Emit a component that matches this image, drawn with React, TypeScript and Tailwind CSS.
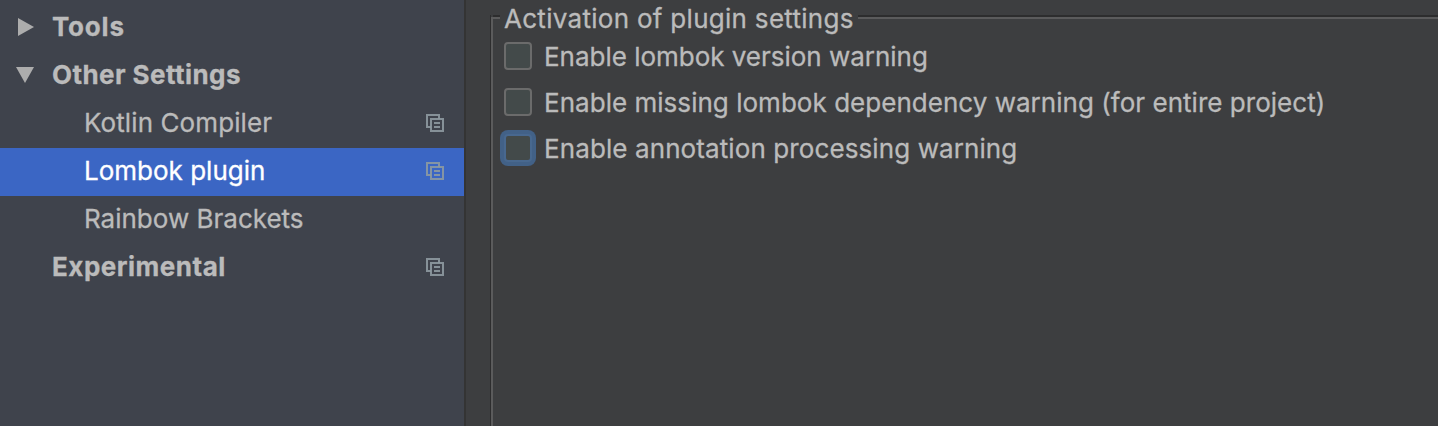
import React from 'react';

function CopyIcon() {
  return (
    <svg className="mr-[19px] shrink-0" width="20" height="20" viewBox="0 0 20 20" fill="none" stroke="#8e9aa1" strokeOpacity="0.9" strokeWidth="2">
      <path d="M6 14H2V2H14V6" />
      <path d="M6 6H18V18H6Z" />
      <path d="M9 10H15M9 14H15" />
    </svg>
  );
}

type RowProps = { label: string; bold?: boolean; arrow?: 'right' | 'down'; selected?: boolean; copy?: boolean; text: string };

function Row({ label, bold, arrow, selected, copy, text }: RowProps) {
  return (
    <div className={`flex h-12 items-center ${selected ? 'bg-[#3b66c4] text-white' : ''}`}>
      <div className={`flex shrink-0 pb-[2px] ${bold ? 'w-[52px]' : 'w-[84px]'}`}>
        {arrow === 'right' && (
          <svg className="ml-[18px]" width="16" height="18" viewBox="0 0 16 18"><path d="M0 0L16 9L0 18Z" fill="#adadad" /></svg>
        )}
        {arrow === 'down' && (
          <svg className="ml-4" width="18" height="16" viewBox="0 0 18 16"><path d="M0 0H18L9 16Z" fill="#adadad" /></svg>
        )}
      </div>
      <span className={`whitespace-nowrap pb-0.5 ${bold ? 'font-bold' : ''} ${text}`}>{label}</span>
      {copy && <div className="ml-auto pb-0.5"><CopyIcon /></div>}
    </div>
  );
}

function Check({ label, focused, text }: { label: string; focused?: boolean; text: string }) {
  return (
    <div className="flex h-[46px] items-center">
      <div className={`mb-0.5 h-7 w-7 shrink-0 rounded-[4px] border-2 bg-[#434a4a] ${focused ? 'border-[#48688f] ring-4 ring-[#426187]' : 'border-[#6b6b6b]'}`} />
      <span className={`ml-3 whitespace-nowrap ${text}`}>{label}</span>
    </div>
  );
}

export default function App() {
  return (
    <div className="flex h-[426px] w-[1438px] overflow-hidden bg-[#3d3e40] font-['Inter',sans-serif] text-[26px] leading-[30px] text-[#bbbbbb] [-webkit-text-stroke:0.3px]">
      <div className="w-[464px] shrink-0 bg-[#3f434c] pt-1">
        <Row label="Tools" bold arrow="right" text="tracking-[0.8px]" />
        <Row label="Other Settings" bold arrow="down" text="tracking-[0.43px]" />
        <Row label="Kotlin Compiler" copy text="tracking-[0.1px]" />
        <Row label="Lombok plugin" copy selected text="" />
        <Row label="Rainbow Brackets" text="" />
        <Row label="Experimental" bold copy text="tracking-[0.5px]" />
      </div>
      <div className="w-[2px] shrink-0 bg-[#343434]" />
      <div className="flex flex-1 pl-6">
        <div className="mt-[15px] h-[411px] w-[1px] shrink-0 bg-[#2d2d2e]" />
        <div className="mt-[17px] h-[409px] w-[2px] shrink-0 bg-[#5b5b5c]" />
        <div className="flex-1">
          <div className="flex h-[34px]">
            <div className="mt-[15px] h-1 w-[7px] border-b-2 border-t-2 border-b-[#5b5b5c] border-t-[#2d2d2e]" />
            <span className="ml-1 whitespace-nowrap pt-1 tracking-[0.29px]">Activation of plugin settings</span>
            <div className="ml-1 mt-[15px] h-1 flex-1 border-b-2 border-t-2 border-b-[#5b5b5c] border-t-[#2d2d2e]" />
          </div>
          <div className="pl-[11px]">
            <Check label="Enable lombok version warning" text="tracking-[-0.02px]" />
            <Check label="Enable missing lombok dependency warning (for entire project)" text="tracking-[0.03px]" />
            <Check label="Enable annotation processing warning" focused text="tracking-[0.1px]" />
          </div>
        </div>
      </div>
    </div>
  );
}
